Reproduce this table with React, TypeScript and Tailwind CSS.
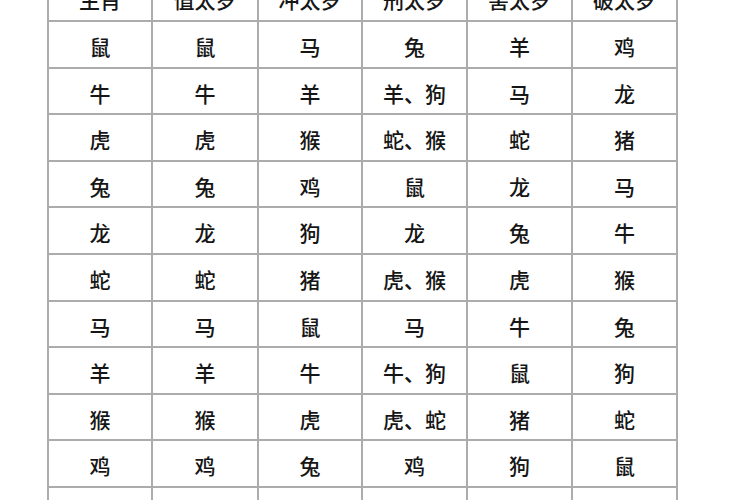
const header = ["生肖", "值太岁", "冲太岁", "刑太岁", "害太岁", "破太岁"];

const rows = [
  ["鼠", "鼠", "马", "兔", "羊", "鸡"],
  ["牛", "牛", "羊", "羊、狗", "马", "龙"],
  ["虎", "虎", "猴", "蛇、猴", "蛇", "猪"],
  ["兔", "兔", "鸡", "鼠", "龙", "马"],
  ["龙", "龙", "狗", "龙", "兔", "牛"],
  ["蛇", "蛇", "猪", "虎、猴", "虎", "猴"],
  ["马", "马", "鼠", "马", "牛", "兔"],
  ["羊", "羊", "牛", "牛、狗", "鼠", "狗"],
  ["猴", "猴", "虎", "虎、蛇", "猪", "蛇"],
  ["鸡", "鸡", "兔", "鸡", "狗", "鼠"],
  ["狗", "狗", "龙", "羊、牛", "鸡", "羊"],
  ["猪", "猪", "蛇", "猪", "猴", "猴"],
];

const Cell = ({ text }: { text: string }) => (
  <div className="bg-white flex items-center justify-center pt-[5px] text-[21px] font-medium text-[#161616] whitespace-nowrap">
    {text}
  </div>
);

export default function App() {
  return (
    <div
      className="w-[750px] h-[500px] overflow-hidden bg-white"
      style={{ fontFamily: '"Noto Sans CJK SC", "Noto Sans", sans-serif' }}
    >
      <div className="ml-[47px] -mt-[26.6px] w-fit p-[2px] bg-[#acacac] grid grid-cols-[102px_104px_102px_103px_103px_103px] auto-rows-[44.6px] gap-[2px]">
        {header.map((h) => (
          <Cell key={h} text={h} />
        ))}
        {rows.map((r, i) => r.map((c, j) => <Cell key={`${i}-${j}`} text={c} />))}
      </div>
    </div>
  );
}
